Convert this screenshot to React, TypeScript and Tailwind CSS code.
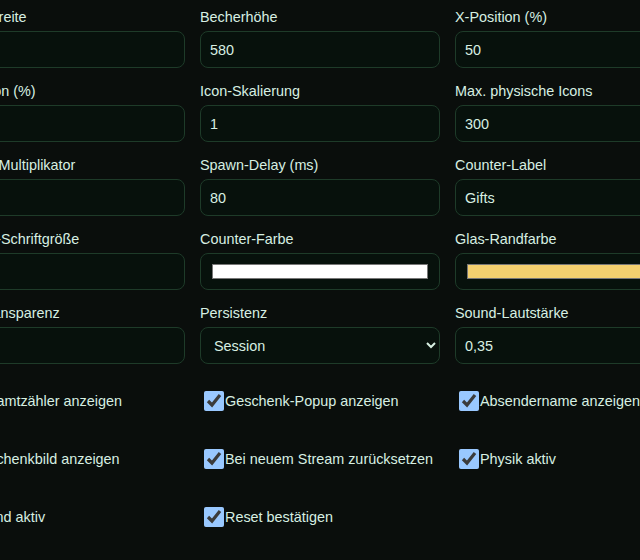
import { useState } from 'react';

type Field = {
  label: string;
  kind: 'text' | 'color' | 'select';
  value: string;
  options?: string[];
};

const fields: Field[] = [
  { label: 'Becherbreite', kind: 'text', value: '420' },
  { label: 'Becherhöhe', kind: 'text', value: '580' },
  { label: 'X-Position (%)', kind: 'text', value: '50' },
  { label: 'Y-Position (%)', kind: 'text', value: '50' },
  { label: 'Icon-Skalierung', kind: 'text', value: '1' },
  { label: 'Max. physische Icons', kind: 'text', value: '300' },
  { label: 'Größen-Multiplikator', kind: 'text', value: '1' },
  { label: 'Spawn-Delay (ms)', kind: 'text', value: '80' },
  { label: 'Counter-Label', kind: 'text', value: 'Gifts' },
  { label: 'Counter-Schriftgröße', kind: 'text', value: '48' },
  { label: 'Counter-Farbe', kind: 'color', value: '#ffffff' },
  { label: 'Glas-Randfarbe', kind: 'color', value: '#f4d06f' },
  { label: 'Glas-Transparenz', kind: 'text', value: '0,15' },
  { label: 'Persistenz', kind: 'select', value: 'Session', options: ['Session', 'Dauerhaft', 'Keine'] },
  { label: 'Sound-Lautstärke', kind: 'text', value: '0,35' },
];

const toggles = [
  'Gesamtzähler anzeigen',
  'Geschenk-Popup anzeigen',
  'Absendername anzeigen',
  'Geschenkbild anzeigen',
  'Bei neuem Stream zurücksetzen',
  'Physik aktiv',
  'Sound aktiv',
  'Reset bestätigen',
];

const inputCls =
  'w-full h-[37px] bg-[#07110c] border border-[#1e3b29] rounded-[8px] px-[9px] text-[14.4px] text-[#d7efe2] outline-none';

export default function App() {
  const [values, setValues] = useState<Record<string, string>>(
    Object.fromEntries(fields.map((f) => [f.label, f.value]))
  );
  const [checks, setChecks] = useState<Record<string, boolean>>(
    Object.fromEntries(toggles.map((t) => [t, true]))
  );

  const update = (key: string, v: string) => setValues({ ...values, [key]: v });

  return (
    <div
      className="w-full h-[560px] overflow-hidden bg-[#0a0e0c] text-[#d7efe2] [color-scheme:dark]"
      style={{ fontFamily: '"Liberation Sans", Arial, sans-serif' }}
    >
      <div className="-ml-[55px] pt-[9px]">
        <div className="grid grid-cols-[repeat(3,240px)] gap-x-[15px] gap-y-[15px]">
          {fields.map((f) => (
            <label key={f.label} className="flex flex-col">
              <span className="text-[14.4px] leading-[17px] mb-[5px] whitespace-nowrap">{f.label}</span>
              {f.kind === 'text' && (
                <input
                  type="text"
                  value={values[f.label]}
                  onChange={(e) => update(f.label, e.target.value)}
                  className={inputCls}
                />
              )}
              {f.kind === 'color' && (
                <input
                  type="color"
                  value={values[f.label]}
                  onChange={(e) => update(f.label, e.target.value)}
                  className="w-full h-[37px] bg-[#07110c] border border-[#1e3b29] rounded-[8px] px-[9px] py-[6px] cursor-pointer"
                />
              )}
              {f.kind === 'select' && (
                <select
                  value={values[f.label]}
                  onChange={(e) => update(f.label, e.target.value)}
                  className={inputCls}
                >
                  {f.options?.map((o) => (
                    <option key={o}>{o}</option>
                  ))}
                </select>
              )}
            </label>
          ))}
        </div>

        <div className="grid grid-cols-[repeat(3,240px)] gap-x-[15px] gap-y-[38px] mt-[27px]">
          {toggles.map((t) => (
            <label key={t} className="flex items-center h-5 text-[14.4px] whitespace-nowrap cursor-pointer">
              <input
                type="checkbox"
                checked={checks[t]}
                onChange={(e) => setChecks({ ...checks, [t]: e.target.checked })}
                className="w-5 h-5 m-0 ml-[4px] mr-[1px] shrink-0"
              />
              <span className="pt-px">{t}</span>
            </label>
          ))}
        </div>
      </div>
    </div>
  );
}
